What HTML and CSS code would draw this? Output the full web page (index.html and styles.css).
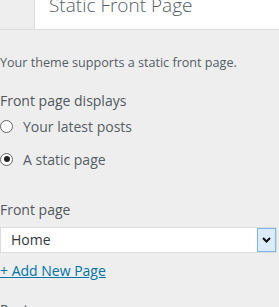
FILE: index.html
```html
<!doctype html>
<html lang="en">
<head>
  <meta charset="utf-8">
  <title>Static Front Page</title>
<link rel="stylesheet" href="styles.css">
</head>
<body>

<div id="panel">

  <div id="header">
    <div class="back"></div>
    <h3 class="title">Static Front Page</h3>
  </div>

  <div id="section">
    <p class="desc">Your theme supports a static front page.</p>

    <div class="control">
      <span class="label">Front page displays</span>
      <label class="radio"><span class="dot"></span>Your latest posts</label>
      <label class="radio"><span class="dot checked"></span>A static page</label>
    </div>

    <div class="control dropdown">
      <span class="label">Front page</span>
      <div class="select">
        <span class="value">Home</span>
        <span class="arrow">
          <svg width="9" height="6" viewBox="0 0 9 6"><path d="M1 1 L4.5 4.5 L8 1" fill="none" stroke="#111" stroke-width="2"/></svg>
        </span>
      </div>
      <a class="add" href="#">+ Add New Page</a>
    </div>

    <div class="control posts">
      <span class="label">Posts page</span>
    </div>
  </div>

</div>

</body>
</html>
```

FILE: styles.css
```css
html {
  box-sizing: border-box;
}
*, *:before, *:after {
  box-sizing: inherit;
}

body {
  margin: 0;
  padding: 0;
  background-color: #eee;
  font-family: 'Open Sans', sans-serif;
  color: #555d66;
  overflow: hidden;
}

#header {
  display: flex;
  height: 30px;
  border-bottom: 1px solid #ddd;
  background-color: #fff;
}

#header .back {
  width: 35px;
  background-color: #eee;
  border-right: 1px solid #ddd;
}

h3.title {
  margin: -9px 0 0 14px;
  font-size: 19px;
  font-weight: 300;
  line-height: 28px;
  color: #555d66;
  white-space: nowrap;
}

#section {
  padding-top: 24px;
}

p.desc {
  margin: 0;
  font-size: 12.6px;
  line-height: 18px;
}

.control {
  margin-top: 19px;
}

.control.dropdown {
  margin-top: 31px;
}

.control.posts {
  margin-top: 19px;
}

.label {
  display: block;
  font-size: 14px;
  font-weight: 500;
  line-height: 20px;
  color: #50575e;
}

.radio {
  display: flex;
  align-items: center;
  height: 20px;
  margin-top: 5px;
  margin-bottom: 13px;
  font-size: 14px;
}

.dot {
  width: 13px;
  height: 13px;
  border: 1px solid #666;
  border-radius: 50%;
  background-color: #fff;
  margin-right: 10px;
  display: flex;
  align-items: center;
  justify-content: center;
}

.dot.checked:after {
  content: "";
  width: 6px;
  height: 6px;
  border-radius: 50%;
  background-color: #222;
}

.select {
  display: flex;
  height: 26px;
  width: 277px;
  margin-top: 7px;
  border: 1px solid #ddd;
  background-color: #fff;
  font-size: 14px;
  color: #32373c;
}

.select .value {
  flex: 1;
  padding-left: 10px;
  line-height: 24px;
}

.select .arrow {
  width: 19px;
  border: 1px solid #7eb4ea;
  background-color: #dcecfc;
  display: flex;
  align-items: center;
  justify-content: center;
}

a.add {
  display: inline-block;
  margin-top: 10px;
  font-size: 14px;
  line-height: 16px;
  color: #0073aa;
  text-decoration: underline;
}
```
